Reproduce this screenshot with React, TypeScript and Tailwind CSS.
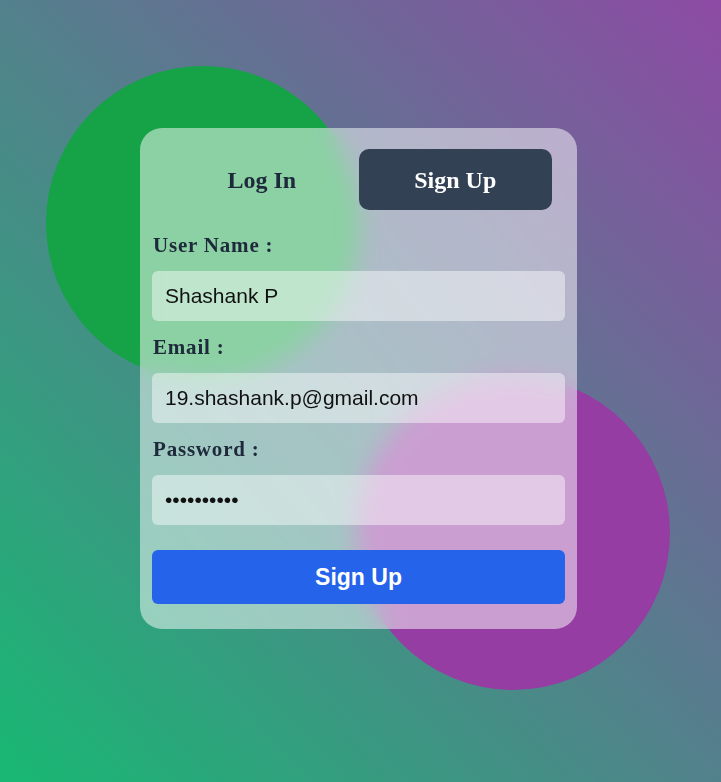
import { useState } from "react";

const serif = "font-['Liberation_Serif','Times_New_Roman',serif]";
const sans = "font-['Liberation_Sans',Arial,sans-serif]";

function Field({ label, type = "text", value }: { label: string; type?: string; value: string }) {
  const [v, setV] = useState(value);
  return (
    <div className="flex flex-col">
      <label className={`${serif} h-[28px] pl-px text-[21px] leading-[28px] font-bold tracking-[0.8px] text-[#1e293b]`}>
        {label}
      </label>
      <input
        type={type}
        value={v}
        onChange={(e) => setV(e.target.value)}
        className={`${sans} mt-3 h-[50px] w-full rounded-md bg-white/45 px-[13px] text-[21px] text-[#111] outline-none`}
      />
    </div>
  );
}

export default function App() {
  const [tab, setTab] = useState<"login" | "signup">("signup");

  return (
    <div className="relative h-[782px] w-[721px] overflow-hidden bg-[linear-gradient(to_top_right,#18b873,#8d4aa4)]">
      {/* background blobs */}
      <div className="absolute left-[46px] top-[66px] h-[314px] w-[314px] rounded-full bg-[#16a247]" />
      <div className="absolute left-[356px] top-[376px] h-[314px] w-[314px] rounded-full bg-[#963da3]" />

      <div className="relative flex pl-[140px] pt-[128px]">
        <div className="flex w-[437px] flex-col rounded-[22px] bg-white/50 px-3 pb-[25px] pt-[21px] backdrop-blur-md">
          <div className="mx-[13px] flex">
            <button
              onClick={() => setTab("login")}
              className={`${serif} h-[61px] flex-1 rounded-[10px] text-[24px] font-bold ${
                tab === "login" ? "bg-[#334155] text-white" : "text-[#1e293b]"
              }`}
            >
              Log In
            </button>
            <button
              onClick={() => setTab("signup")}
              className={`${serif} h-[61px] flex-1 rounded-[10px] text-[24px] font-bold ${
                tab === "signup" ? "bg-[#334155] text-white" : "text-[#1e293b]"
              }`}
            >
              Sign Up
            </button>
          </div>

          <div className="mt-[21px] flex flex-col gap-3">
            <Field label="User Name :" value="Shashank P" />
            <Field label="Email :" value="19.shashank.p@gmail.com" />
            <Field label="Password :" type="password" value="0123456789" />
          </div>

          <button className={`${sans} mt-[25px] h-[54px] w-full rounded-md bg-[#2563eb] text-[23px] font-bold text-white`}>
            Sign Up
          </button>
        </div>
      </div>
    </div>
  );
}
